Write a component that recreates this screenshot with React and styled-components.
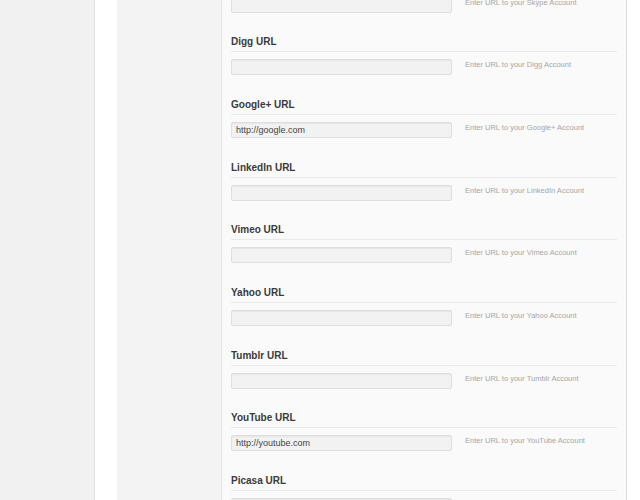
import React from 'react';
import styled, { createGlobalStyle } from 'styled-components';

const Global = createGlobalStyle`
  html, body {
    margin: 0;
    padding: 0;
    background: #f1f1f1;
  }
  body {
    font-family: "Liberation Sans", Arial, sans-serif;
  }
`;

const Page = styled.div`
  display: flex;
  height: 500px;
  overflow: hidden;
`;

const Gutter = styled.div`
  width: 94px;
  flex: none;
  background: #f1f1f1;
`;

const Panel = styled.div`
  flex: 1;
  display: flex;
  background: #fff;
  border-left: 1px solid #e2e2e2;
  padding-left: 22px;
`;

const Sidebar = styled.div`
  width: 104px;
  flex: none;
  background: #f3f3f3;
  border-right: 1px solid #e4e4e4;
`;

const Content = styled.div`
  width: 386px;
  flex: none;
  background: #fafafa;
  border-right: 1px solid #e0e0e0;
  padding: 0 9px;
  overflow: hidden;
`;

const List = styled.div`
  margin-top: -26.4px;
`;

const Row = styled.div`
  margin-bottom: 23.7px;
`;

const Label = styled.div`
  font-size: 10px;
  line-height: 12px;
  font-weight: bold;
  color: #3a3a3a;
  padding-bottom: 3px;
  border-bottom: 1px solid #e9e9e9;
`;

const Field = styled.div`
  display: flex;
  align-items: flex-start;
  margin-top: 7px;
  gap: 13px;
`;

const Input = styled.div`
  width: 221px;
  height: 16px;
  box-sizing: border-box;
  background: #f2f2f2;
  border: 1px solid #dedede;
  border-radius: 2px;
  box-shadow: inset 0 1px 1px rgba(0, 0, 0, 0.05);
  padding: 0 4px;
  font-size: 9px;
  line-height: 14px;
  color: #444;
`;

const Help = styled.div`
  font-size: 7.5px;
  line-height: 9px;
  padding-top: 1px;
  color: #a6a6a6;
`;

const networks = [
  { name: 'Skype', value: '' },
  { name: 'Digg', value: '' },
  { name: 'Google+', value: 'http://google.com' },
  { name: 'LinkedIn', value: '' },
  { name: 'Vimeo', value: '' },
  { name: 'Yahoo', value: '' },
  { name: 'Tumblr', value: '' },
  { name: 'YouTube', value: 'http://youtube.com' },
  { name: 'Picasa', value: '' },
];

export default function App() {
  return (
    <>
      <Global />
      <Page>
        <Gutter />
        <Panel>
          <Sidebar />
          <Content>
            <List>
              {networks.map((n) => (
                <Row key={n.name}>
                  <Label>{n.name} URL</Label>
                  <Field>
                    <Input>{n.value}</Input>
                    <Help>Enter URL to your {n.name} Account</Help>
                  </Field>
                </Row>
              ))}
            </List>
          </Content>
        </Panel>
      </Page>
    </>
  );
}
